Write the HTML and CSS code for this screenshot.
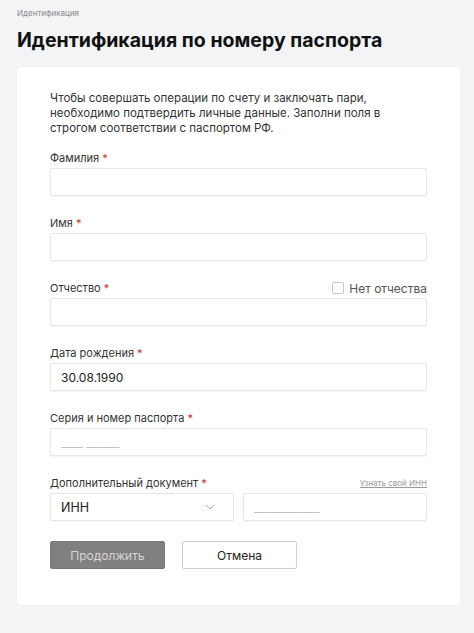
FILE: index.html
```html
<!DOCTYPE html>
<html lang="ru">
<head>
    <meta charset="UTF-8">
    <meta name="viewport" content="width=device-width, initial-scale=1.0">
    <title>Идентификация</title>
    <link rel="stylesheet" href="styles.css">
</head>
<body>
    <div class="page">
        <div class="breadcrumb">Идентификация</div>
        <h1>Идентификация по номеру паспорта</h1>
        <div class="card">
            <p class="intro">Чтобы совершать операции по счету и заключать пари, необходимо подтвердить личные данные. Заполни поля в строгом соответствии с паспортом РФ.</p>

            <div class="field">
                <div class="label-row"><label>Фамилия <span class="req">*</span></label></div>
                <div class="input"></div>
            </div>
            <div class="field">
                <div class="label-row"><label>Имя <span class="req">*</span></label></div>
                <div class="input"></div>
            </div>
            <div class="field">
                <div class="label-row">
                    <label>Отчество <span class="req">*</span></label>
                    <label class="check"><span class="box"></span>Нет отчества</label>
                </div>
                <div class="input"></div>
            </div>
            <div class="field">
                <div class="label-row"><label>Дата рождения <span class="req">*</span></label></div>
                <div class="input">30.08.1990</div>
            </div>
            <div class="field">
                <div class="label-row"><label>Серия и номер паспорта <span class="req">*</span></label></div>
                <div class="input placeholder">____ ______</div>
            </div>
            <div class="field">
                <div class="label-row">
                    <label>Дополнительный документ <span class="req">*</span></label>
                    <a class="hint" href="#">Узнать свой ИНН</a>
                </div>
                <div class="pair">
                    <div class="input select">
                        <span>ИНН</span>
                        <svg width="10" height="6" viewBox="0 0 10 6"><path d="M1 1l4 4 4-4" fill="none" stroke="#aaa" stroke-width="1"/></svg>
                    </div>
                    <div class="input placeholder">____________</div>
                </div>
            </div>

            <div class="buttons">
                <button class="primary">Продолжить</button>
                <button class="secondary">Отмена</button>
            </div>
        </div>
    </div>
</body>
</html>
```

FILE: styles.css
```css
body {
    margin: 0;
    background-color: #f3f4f6;
    font-family: Inter, "Liberation Sans", Arial, sans-serif;
    color: #222;
}
.page {
    padding: 8px 14px 29px 17px;
}
.breadcrumb {
    font-size: 8px;
    line-height: 10px;
    color: #8a8a8a;
}
h1 {
    margin: 10px 0 15px;
    font-size: 19.5px;
    line-height: 24px;
    font-weight: 700;
    color: #111;
}
.card {
    background: white;
    border-radius: 4px;
    padding: 24px 33px 36px;
    box-shadow: 0 0 2px rgba(0, 0, 0, 0.04);
}
.intro {
    margin: 0 0 15px;
    font-size: 11.5px;
    line-height: 15px;
    color: #333;
}
.field {
    margin-bottom: 20px;
}
.label-row {
    display: flex;
    justify-content: space-between;
    align-items: center;
    height: 14px;
    margin-bottom: 3px;
}
label {
    font-size: 11px;
    color: #333;
}
.req {
    color: #c9302c;
}
.check {
    display: flex;
    align-items: center;
    gap: 5px;
    font-size: 12px;
    color: #555;
}
.box {
    width: 10px;
    height: 10px;
    border: 1px solid #c8c8c8;
    border-radius: 2px;
}
.hint {
    font-size: 8px;
    color: #9a9a9a;
}
.input {
    box-sizing: border-box;
    height: 28px;
    padding: 0 10px;
    display: flex;
    align-items: center;
    border: 1px solid #e6e6e6;
    border-radius: 2px;
    box-shadow: 0 1px 1px rgba(0, 0, 0, 0.04);
    font-size: 12px;
    color: #222;
}
.placeholder {
    color: #c2c2c2;
}
.pair {
    display: grid;
    grid-template-columns: 1fr 1fr;
    gap: 9px;
}
.select {
    justify-content: space-between;
    padding-right: 10px;
    font-size: 12.5px;
}
.select svg {
    margin-right: 8px;
}
.buttons {
    display: flex;
    gap: 17px;
}
button {
    width: 115px;
    height: 28px;
    border-radius: 2px;
    font-family: inherit;
    font-size: 12px;
    cursor: pointer;
}
.primary {
    background-color: #808080;
    border: 1px solid #777;
    color: #d6d6d6;
}
.secondary {
    background-color: white;
    border: 1px solid #cfcfcf;
    color: #222;
}
```
